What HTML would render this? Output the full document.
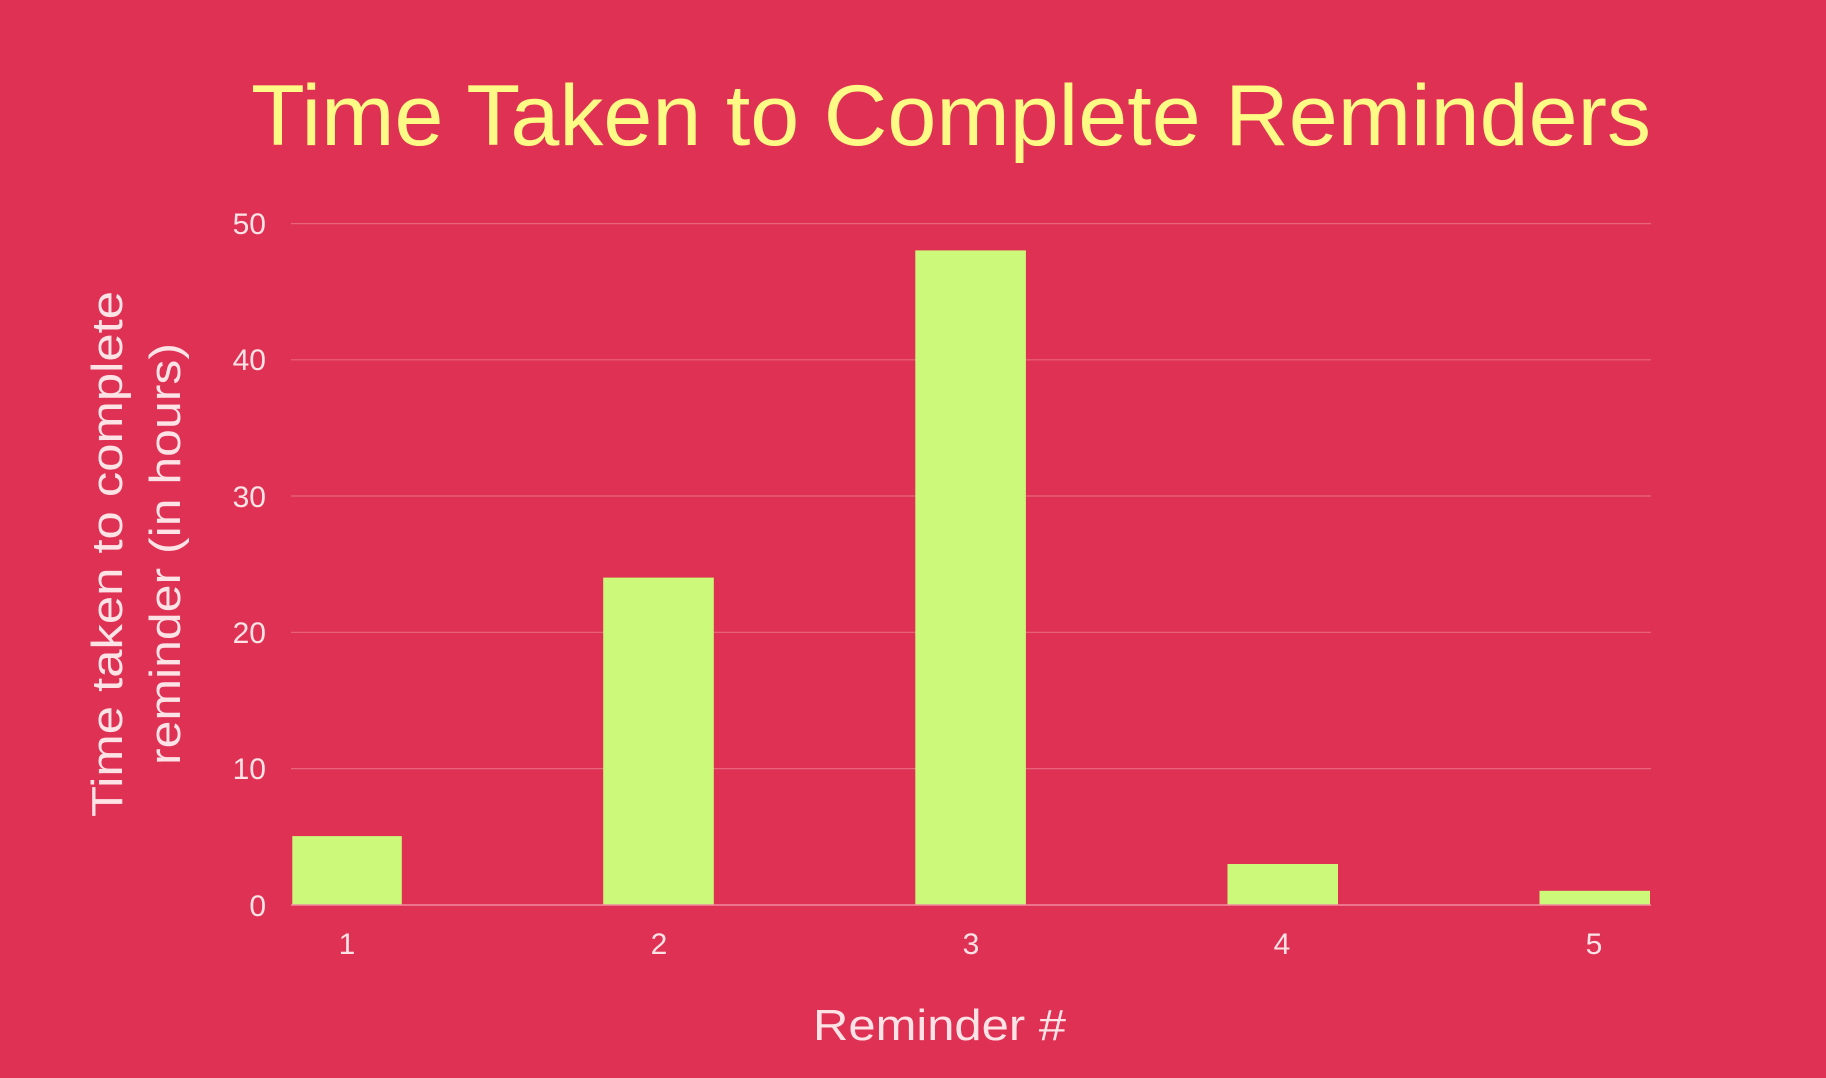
<!DOCTYPE html>
<html><head><meta charset="utf-8"><style>
html,body{margin:0;padding:0;background:#de3154;}
svg{display:block}
</style></head><body>
<svg width="1826" height="1078" viewBox="0 0 1826 1078" xmlns="http://www.w3.org/2000/svg" font-family="Liberation Sans, DejaVu Sans, sans-serif">
<rect width="1826" height="1078" fill="#de3154"/>
<text x="251" y="145" font-size="86" fill="#fdfb86" textLength="1400" lengthAdjust="spacingAndGlyphs">Time Taken to Complete Reminders</text>
<g stroke="#e8667d" stroke-width="1.2">
<line x1="291" x2="1651" y1="223.6" y2="223.6"/>
<line x1="291" x2="1651" y1="359.8" y2="359.8"/>
<line x1="291" x2="1651" y1="496" y2="496"/>
<line x1="291" x2="1651" y1="632.3" y2="632.3"/>
<line x1="291" x2="1651" y1="768.6" y2="768.6"/>
</g>
<g fill="#ccf97a">
<rect x="292.3" y="836.1" width="109.5" height="68.7"/>
<rect x="603.2" y="577.6" width="110.6" height="327.2"/>
<rect x="915.3" y="250.4" width="110.6" height="654.4"/>
<rect x="1227.5" y="864" width="110.5" height="40.8"/>
<rect x="1539.5" y="890.8" width="110.5" height="14"/>
</g>
<line x1="291" x2="1651" y1="905" y2="905" stroke="#f08aa0" stroke-width="1.5"/>
<g fill="#fde3e6" font-size="30" text-anchor="end">
<text x="266" y="234">50</text>
<text x="266" y="370">40</text>
<text x="266" y="507">30</text>
<text x="266" y="643">20</text>
<text x="266" y="779">10</text>
<text x="266" y="916">0</text>
</g>
<g fill="#fde3e6" font-size="30" text-anchor="middle">
<text x="347" y="954">1</text>
<text x="659" y="954">2</text>
<text x="971" y="954">3</text>
<text x="1282" y="954">4</text>
<text x="1594" y="954">5</text>
</g>
<text x="813" y="1040" font-size="44" fill="#fde3e6" textLength="253" lengthAdjust="spacingAndGlyphs">Reminder #</text>
<g transform="translate(134,554) rotate(-90)" fill="#fde3e6" font-size="44">
<text x="-263" y="-12" textLength="526" lengthAdjust="spacingAndGlyphs">Time taken to complete</text>
<text x="-211" y="46" textLength="422" lengthAdjust="spacingAndGlyphs">reminder (in hours)</text>
</g>
</svg>
</body></html>
